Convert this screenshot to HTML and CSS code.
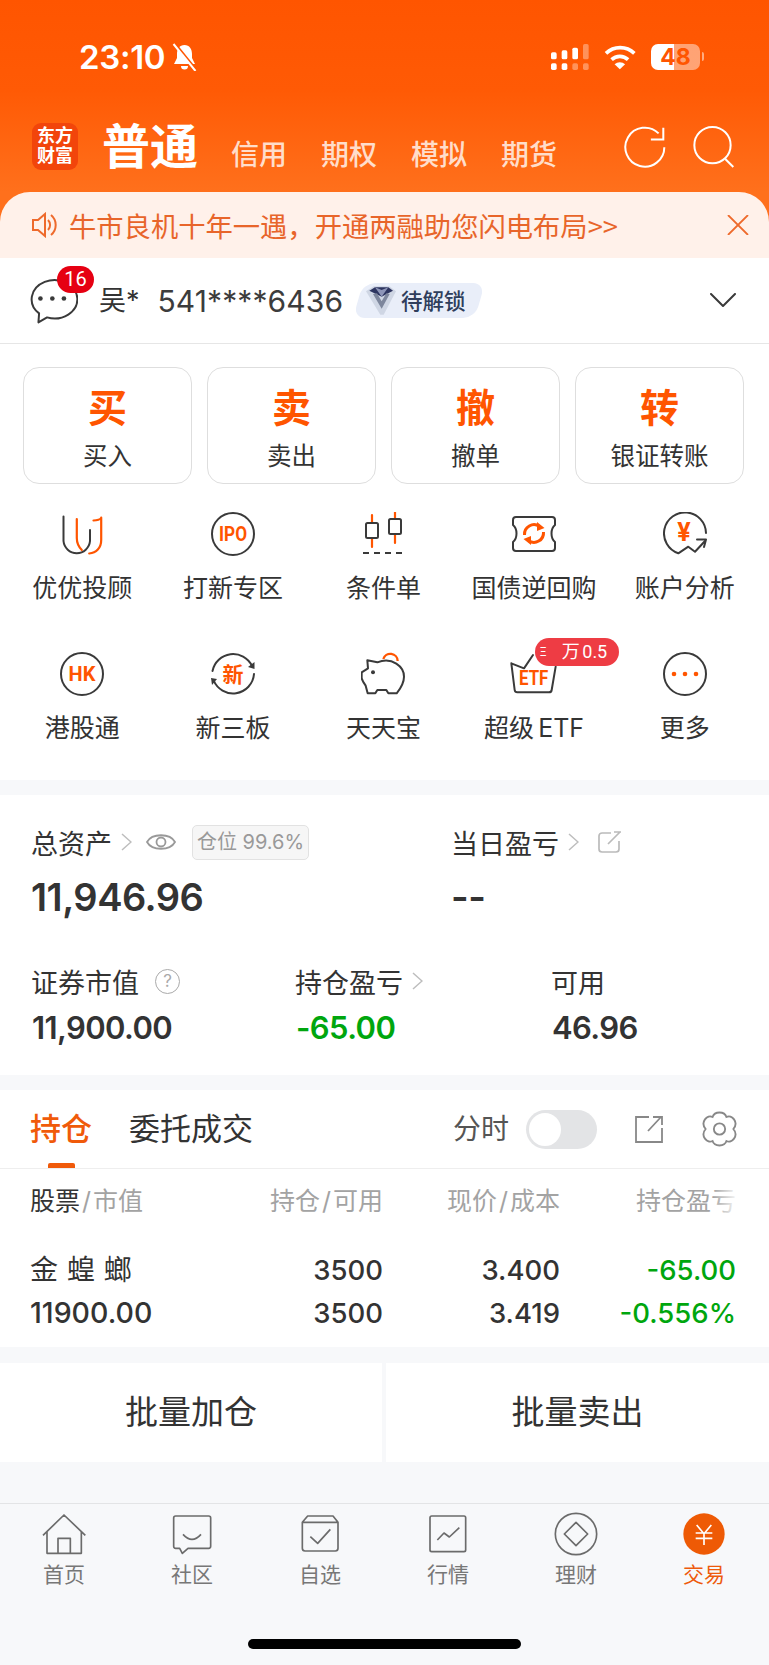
FILE: index.html
```html
<!DOCTYPE html>
<html lang="zh-CN">

<head>
    <meta charset="UTF-8">
    <meta name="viewport" content="width=device-width, initial-scale=1.0">
    <title>交易</title>
    <link rel="stylesheet" href="styles.css">
</head>

<body>

    <div class="top">
        <div class="status">
            <span class="time">23:10</span>
            <svg class="bell" viewBox="0 0 26 28">
                <path class="fill-white" d="M13 2C8 2 5.500 6 5.500 11V15L2.500 21H23.500L20.500 15V11C20.500 6 18 2 13 2Z"/>
                <path class="fill-white" d="M9.500 23h7a3.500 3.500 0 0 1-7 0Z"/>
                <path class="slash-back" d="M3 0L24 26"/>
                <path class="slash" d="M2 1L24 28"/>
            </svg>
            <svg class="signal" viewBox="33 27 114 78">
                <rect class="fill-white" x="33" y="52" width="17" height="21" rx="5"/>
                <rect class="fill-white" x="65" y="46" width="17" height="27" rx="5"/>
                <rect class="fill-white" x="97" y="38" width="17" height="35" rx="5"/>
                <rect class="fill-dim" x="129" y="27" width="17" height="46" rx="5"/>
                <rect class="fill-white" x="33" y="85" width="17" height="20" rx="5"/>
                <rect class="fill-white" x="65" y="85" width="17" height="20" rx="5"/>
                <rect class="fill-dim" x="97" y="85" width="17" height="20" rx="5"/>
                <rect class="fill-dim" x="129" y="85" width="17" height="20" rx="5"/>
            </svg>
            <svg class="wifi" viewBox="190 30 100 75">
                <path class="line-white-10" d="M196 55A62 62 0 0 1 282 55"/>
                <path class="line-white-10" d="M213 74A36 36 0 0 1 263 74"/>
                <path class="fill-white" d="M222 88L238 103L254 88A24 24 0 0 0 222 88Z"/>
            </svg>
            <div class="battery">48</div>
        </div>

        <div class="top-tabs">
            <div class="logo">东方<br>财富</div>
            <div class="tab-main">普通</div>
            <div class="tab-sub">信用</div>
            <div class="tab-sub">期权</div>
            <div class="tab-sub">模拟</div>
            <div class="tab-sub">期货</div>
            <svg class="top-icon top-icon-first" viewBox="255 275 125 125">
                <path class="line-white-6" d="M375 338A58 58 0 1 1 358 297"/>
                <path class="line-white-6" d="M335 315H372V280"/>
            </svg>
            <svg class="top-icon" viewBox="460 270 125 125">
                <circle class="line-white-6" cx="518" cy="327" r="54"/>
                <path class="line-white-6" d="M556 368L580 392"/>
            </svg>
        </div>

        <div class="notice">
            <svg class="speaker" viewBox="0 0 25 26">
                <path d="M1 8H6L13 2V24L6 18H1Z"/>
                <path d="M16 8a7 7 0 0 1 0 10"/>
                <path d="M19 3a13 13 0 0 1 0 20"/>
            </svg>
            <span class="notice-text">牛市良机十年一遇，开通两融助您闪电布局&gt;&gt;</span>
            <svg class="notice-close" viewBox="0 0 22 20">
                <path d="M1 0L21 20M21 0L1 20"/>
            </svg>
        </div>
    </div>

    <div class="account">
        <div class="chat">
            <svg class="chat-icon" viewBox="25 50 150 142">
                <path class="line-dark-6" d="M58 160A69 58 0 1 1 82 172L56 187Z"/>
                <circle class="fill-dark" cx="62" cy="115" r="7"/>
                <circle class="fill-dark" cx="98" cy="115" r="7"/>
                <circle class="fill-dark" cx="133" cy="115" r="7"/>
            </svg>
            <span class="chat-badge">16</span>
        </div>
        <span class="acc-name">吴*</span>
        <span class="acc-no">541****6436</span>
        <div class="level">
            <svg class="gem" viewBox="1035 85 90 85">
                <path class="gem-base" d="M1035 100L1058 85H1105L1125 100L1088 170H1078Z"/>
                <path class="gem-dark" d="M1045 98L1062 88H1102L1116 98L1082 116Z"/>
                <path class="gem-mid" d="M1056 108L1082 152L1106 108L1096 106L1082 130L1068 106Z"/>
                <path class="gem-light" d="M1062 88L1082 116L1102 88L1082 96Z"/>
            </svg>
            <span class="level-text">待解锁</span>
        </div>
        <svg class="acc-arrow" viewBox="0 0 26 15">
            <path class="line-dark-2" d="M1 1L13 13L25 1"/>
        </svg>
    </div>

    <div class="main-panel">
        <div class="trade-btns">
            <div class="trade-btn"><span class="trade-big">买</span><span class="trade-label">买入</span></div>
            <div class="trade-btn"><span class="trade-big">卖</span><span class="trade-label">卖出</span></div>
            <div class="trade-btn"><span class="trade-big">撤</span><span class="trade-label">撤单</span></div>
            <div class="trade-btn"><span class="trade-big">转</span><span class="trade-label">银证转账</span></div>
        </div>

        <div class="quick">
            <div class="quick-item">
                <svg class="quick-icon" viewBox="0 0 44 44">
                    <path class="line-dark-2" d="M3.500 4.500V29a13.300 13.300 0 0 0 26.500 0V18"/>
                    <path class="line-orange-2" d="M16.800 7V26c0 5 2 9 5 12"/>
                    <path class="line-orange-2" d="M33.500 8.500c3 0 7.500-1 7.700-3V28c0 8-5 13-12 13.500"/>
                </svg>
                <span class="quick-label">优优投顾</span>
            </div>
            <div class="quick-item">
                <svg class="quick-icon" viewBox="0 0 44 44">
                    <circle class="line-dark-2" cx="22" cy="22" r="21"/>
                    <text class="icon-text icon-text-20" x="22" y="29" textLength="28" lengthAdjust="spacingAndGlyphs">IPO</text>
                </svg>
                <span class="quick-label">打新专区</span>
            </div>
            <div class="quick-item">
                <svg class="quick-icon" viewBox="0 0 44 44">
                    <path class="line-orange-2" d="M11 3V35M34 0V31"/>
                    <rect class="line-dark-2 fill-bg" x="5" y="11" width="12" height="15" rx="1.500"/>
                    <rect class="line-dark-2 fill-bg" x="28" y="7" width="12" height="15" rx="1.500"/>
                    <path class="line-dark-2 dashed" d="M2 41H43"/>
                </svg>
                <span class="quick-label">条件单</span>
            </div>
            <div class="quick-item">
                <svg class="quick-icon" viewBox="0 0 44 44">
                    <path class="line-dark-2" d="M4 5H40a3 3 0 0 1 3 3v5c-2.500 2-3.500 5-3.500 8.500S40.500 28 43 30v6a3 3 0 0 1-3 3H4a3 3 0 0 1-3-3v-6c2.500-2 3.500-5 3.500-8.500S3.500 15 1 13V8a3 3 0 0 1 3-3Z"/>
                    <path class="line-orange-3" d="M12.500 23a9.500 9.500 0 0 1 15-8.500"/>
                    <path class="fill-orange" d="M25 10L32.500 16L25 19Z"/>
                    <path class="line-orange-3" d="M31.500 20a9.500 9.500 0 0 1-15 8.500"/>
                    <path class="fill-orange" d="M19 33L11.500 27L19 24Z"/>
                </svg>
                <span class="quick-label">国债逆回购</span>
            </div>
            <div class="quick-item">
                <svg class="quick-icon" viewBox="0 0 44 44">
                    <path class="line-dark-2" d="M43 21A21 21 0 1 0 15.300 41.300L25.300 34.700L32 39.700L42 29"/>
                    <path class="line-dark-2" d="M34 27.500H43L41 35"/>
                    <text class="icon-text icon-text-24" x="21" y="29">¥</text>
                </svg>
                <span class="quick-label">账户分析</span>
            </div>
            <div class="quick-item">
                <svg class="quick-icon" viewBox="0 0 44 44">
                    <circle class="line-dark-2" cx="22" cy="22" r="21"/>
                    <text class="icon-text icon-text-19" x="22" y="29">HK</text>
                </svg>
                <span class="quick-label">港股通</span>
            </div>
            <div class="quick-item">
                <svg class="quick-icon" viewBox="0 0 44 44">
                    <path class="line-dark-2" d="M1.500 19A21 21 0 0 1 41 14"/>
                    <path class="fill-dark" d="M37 15L43.500 17L43.500 10Z"/>
                    <path class="line-dark-2" d="M43 22A21 21 0 0 1 2.500 28"/>
                    <path class="fill-dark" d="M6 27L0 26L1 33Z"/>
                    <text class="icon-text icon-text-21" x="22" y="30">新</text>
                </svg>
                <span class="quick-label">新三板</span>
            </div>
            <div class="quick-item">
                <svg class="quick-icon" viewBox="936 51 132 132">
                    <path class="line-dark-6" d="M955 76L985 82C1030 65 1065 95 1065 125C1065 145 1055 160 1043 175H1018L1012 165H985L979 175H956L950 152C945 145 940 138 938 130V112L957 100Z"/>
                    <path class="line-orange-6" d="M1003 72a22 22 0 0 1 43 6"/>
                    <circle class="fill-dark" cx="972" cy="112" r="6"/>
                </svg>
                <span class="quick-label">天天宝</span>
            </div>
            <div class="quick-item">
                <svg class="quick-icon quick-icon-open" viewBox="39 51 132 132">
                    <path class="line-dark-6" d="M37 85L47 165Q48 172 55 172H150Q157 172 158 165L170 95M37 85L75 100L102 60"/>
                    <text class="icon-text icon-text-etf" x="104" y="150" textLength="88" lengthAdjust="spacingAndGlyphs">ETF</text>
                </svg>
                <span class="quick-label quick-label-etf">超级 ETF</span>
                <div class="etf-tag"><span class="etf-frag">Ξ</span><span class="etf-text">万 0.5</span></div>
            </div>
            <div class="quick-item">
                <svg class="quick-icon" viewBox="0 0 44 44">
                    <circle class="line-dark-2" cx="22" cy="22" r="21"/>
                    <circle class="fill-orange" cx="11" cy="22" r="2.300"/>
                    <circle class="fill-orange" cx="22" cy="22" r="2.300"/>
                    <circle class="fill-orange" cx="33" cy="22" r="2.300"/>
                </svg>
                <span class="quick-label">更多</span>
            </div>
        </div>
    </div>

    <div class="assets">
        <div class="assets-row">
            <div class="assets-col">
                <div class="assets-label">
                    <span>总资产</span>
                    <svg class="chev" viewBox="0 0 11 18"><path d="M1 1L10 9L1 17"/></svg>
                    <svg class="eye" viewBox="0 0 30 20">
                        <path d="M1 10C6 1 24 1 29 10C24 19 6 19 1 10Z"/>
                        <circle cx="15" cy="10" r="4.500"/>
                    </svg>
                    <span class="pos-tag">仓位 99.6%</span>
                </div>
                <div class="assets-total">11,946.96</div>
            </div>
            <div class="assets-col">
                <div class="assets-label">
                    <span>当日盈亏</span>
                    <svg class="chev" viewBox="0 0 11 18"><path d="M1 1L10 9L1 17"/></svg>
                    <svg class="ext-small" viewBox="0 0 24 22">
                        <path d="M13 2H4a3 3 0 0 0-3 3V18a3 3 0 0 0 3 3H18a3 3 0 0 0 3-3V10"/>
                        <path d="M10 13L22 1M16 1H23"/>
                    </svg>
                </div>
                <div class="assets-total">--</div>
            </div>
        </div>
        <div class="assets-sub">
            <div>
                <div class="sub-label">
                    <span>证券市值</span>
                    <span class="help">?</span>
                </div>
                <div class="sub-value">11,900.00</div>
            </div>
            <div>
                <div class="sub-label">
                    <span>持仓盈亏</span>
                    <svg class="chev" viewBox="0 0 11 18"><path d="M1 1L10 9L1 17"/></svg>
                </div>
                <div class="sub-value green">-65.00</div>
            </div>
            <div>
                <div class="sub-label"><span>可用</span></div>
                <div class="sub-value">46.96</div>
            </div>
        </div>
    </div>

    <div class="holdings">
        <div class="hold-tabs">
            <span class="hold-tab active">持仓</span>
            <span class="hold-tab">委托成交</span>
            <span class="fen">分时</span>
            <div class="toggle"><span class="knob"></span></div>
            <svg class="ext-big" viewBox="0 0 30 29">
                <path d="M15 2H2V27H28V13"/>
                <path d="M14 16L27 2M19 2H28V10"/>
            </svg>
            <svg class="gear" viewBox="0 0 36 35">
                <path d="M11.250 5.800C13 0 23 0 24.750 5.800C30 3 37 11 31.500 17.500C37 24 30 32 24.750 29.200C23 35 13 35 11.250 29.200C6 32 -1 24 4.500 17.500C-1 11 6 3 11.250 5.800Z"/>
                <circle cx="18" cy="17.500" r="5.500"/>
            </svg>
        </div>
        <div class="table-head">
            <div><span class="head-dark">股票</span><span class="sep">/</span>市值</div>
            <div class="cell-right">持仓<span class="sep">/</span>可用</div>
            <div class="cell-right">现价<span class="sep">/</span>成本</div>
            <div class="cell-right">持仓盈亏</div>
        </div>
        <div class="table-row">
            <div class="stock-name">金 蝗 螂</div>
            <div class="cell-right">3500</div>
            <div class="cell-right">3.400</div>
            <div class="cell-right green">-65.00</div>
            <div class="stock-value">11900.00</div>
            <div class="cell-right">3500</div>
            <div class="cell-right">3.419</div>
            <div class="cell-right green">-0.556%</div>
        </div>
    </div>

    <div class="batch">
        <div class="batch-btn">批量加仓</div>
        <div class="batch-btn">批量卖出</div>
    </div>

    <div class="nav">
        <div class="nav-items">
            <div class="nav-item">
                <svg class="nav-icon" viewBox="37 21 132 132">
                    <path d="M40 91L103 30L167 91M52 80V145H155V80M85 145V100H122V145"/>
                </svg>
                <span>首页</span>
            </div>
            <div class="nav-item">
                <svg class="nav-icon" viewBox="421 21 132 132">
                    <path d="M438 33H537Q543 33 543 39V124Q543 130 537 130H475L458 145L450 130H438Q432 130 432 124V39Q432 33 438 33Z"/>
                    <path d="M460 88Q487 118 514 88"/>
                </svg>
                <span>社区</span>
            </div>
            <div class="nav-item">
                <svg class="nav-icon" viewBox="803 21 132 132">
                    <path d="M832 33H908L923 52V130Q923 138 915 138H824Q816 138 816 130V52ZM816 52H923"/>
                    <path d="M840 95L862 115L900 73"/>
                </svg>
                <span>自选</span>
            </div>
            <div class="nav-item">
                <svg class="nav-icon" viewBox="18 21 132 132">
                    <rect x="30" y="33" width="107" height="107" rx="5"/>
                    <path d="M52 105L72 84L88 96L118 68"/>
                </svg>
                <span>行情</span>
            </div>
            <div class="nav-item">
                <svg class="nav-icon" viewBox="402 21 132 132">
                    <circle cx="468" cy="87" r="62"/>
                    <path d="M468 52L503 87L468 122L433 87Z"/>
                </svg>
                <span>理财</span>
            </div>
            <div class="nav-item nav-active">
                <svg class="nav-icon" viewBox="785 21 132 132">
                    <circle class="nav-disc" cx="851" cy="87" r="62"/>
                    <path class="nav-yen" d="M829 60L851 86L873 60M826 84H876M826 100H876M851 86V120"/>
                </svg>
                <span>交易</span>
            </div>
        </div>
        <div class="home-bar"></div>
    </div>

</body>

</html>
```

FILE: styles.css
```css
* {
    box-sizing: border-box;
}

body {
    margin: 0;
    width: 769px;
    height: 1665px;
    overflow: hidden;
    background-color: #f7f8fa;
    color: #333;
    font-family: Inter, "Noto Sans CJK SC", sans-serif;
}

svg {
    display: block;
    flex: none;
}

/* shared svg strokes */
.fill-white { fill: #fff; }
.fill-dim { fill: rgba(255, 255, 255, 0.35); }
.fill-dark { fill: #3a3a3a; }
.fill-orange { fill: #ff5500; }
.fill-bg { fill: #fff; }

.line-white-6,
.line-white-10,
.line-dark-2,
.line-dark-6,
.line-orange-2,
.line-orange-3,
.line-orange-6 {
    fill: none;
    stroke-linecap: round;
    stroke-linejoin: round;
}

.line-white-6 { stroke: #fff; stroke-width: 6; stroke-linecap: butt; stroke-linejoin: miter; }
.line-white-10 { stroke: #fff; stroke-width: 11; stroke-linecap: butt; }
.line-dark-2 { stroke: #3a3a3a; stroke-width: 2; }
.line-dark-6 { stroke: #3a3a3a; stroke-width: 6; }
.line-orange-2 { stroke: #ff5500; stroke-width: 2.200; }
.line-orange-3 { stroke: #ff5500; stroke-width: 3; stroke-linecap: butt; }
.line-orange-6 { stroke: #ff5500; stroke-width: 7; stroke-linecap: butt; }
.line-dark-2.fill-bg { fill: #fff; }
.dashed { stroke-dasharray: 6 5; stroke-linecap: butt; }

.icon-text {
    fill: #ff5500;
    font-family: Roboto, "Noto Sans CJK SC", sans-serif;
    font-weight: 700;
    text-anchor: middle;
}

.icon-text-19 { font-size: 20px; }
.icon-text-20 { font-size: 20px; }
.icon-text-21 { font-size: 21px; font-family: "Noto Sans CJK SC", sans-serif; }
.icon-text-24 { font-size: 25px; }
.icon-text-etf { font-size: 60px; }

/* header */
.top {
    height: 258px;
    padding-top: 43px;
    background: linear-gradient(#ff5500 0, #ff5a05 90px, #ff701c 192px);
    color: #fff;
}

.status {
    display: flex;
    align-items: center;
    height: 28px;
    padding: 0 69px 0 79px;
}

.time {
    font-size: 33px;
    font-weight: 600;
    letter-spacing: -0.3px;
    line-height: 28px;
}

.bell {
    width: 27px;
    height: 28px;
    margin-left: 6px;
}

.slash {
    stroke: #fff;
    stroke-width: 2;
}

.slash-back {
    stroke: #ff5500;
    stroke-width: 2.500;
}

.signal {
    width: 38px;
    height: 26px;
    margin-left: auto;
}

.wifi {
    width: 33px;
    height: 25px;
    margin-left: 15px;
}

.battery {
    position: relative;
    width: 49px;
    height: 26px;
    margin-left: 14px;
    border-radius: 7px;
    background: linear-gradient(90deg, #fff 47%, rgba(255, 255, 255, 0.45) 47%);
    color: #ff5500;
    font-size: 23px;
    font-weight: 700;
    line-height: 26px;
    text-align: center;
}

.battery::after {
    content: "";
    position: absolute;
    right: -4px;
    top: 8px;
    width: 2px;
    height: 9px;
    border-radius: 0 2px 2px 0;
    background: rgba(255, 255, 255, 0.5);
}

.top-tabs {
    display: flex;
    align-items: flex-end;
    height: 47px;
    margin-top: 52px;
    padding: 0 34px 0 32px;
}

.logo {
    width: 46px;
    height: 47px;
    padding-top: 3px;
    border-radius: 9px;
    background-color: #f2450b;
    font-size: 18px;
    font-weight: 700;
    line-height: 20px;
    text-align: center;
}

.tab-main {
    margin: 0 33px 0 24px;
    font-size: 48px;
    font-weight: 700;
    line-height: 47px;
}

.tab-sub {
    width: 56px;
    margin-right: 34px;
    color: rgba(255, 255, 255, 0.78);
    font-size: 28px;
    font-weight: 500;
    line-height: 30px;
}

.top-icon {
    width: 42px;
    height: 42px;
    margin-bottom: 2px;
}

.top-icon-first {
    margin-left: auto;
    margin-right: 27px;
}

.notice {
    display: flex;
    align-items: center;
    height: 66px;
    margin-top: 22px;
    padding: 0 20px 0 32px;
    border-radius: 30px 30px 0 0;
    background-color: #fff1ea;
    color: #e8652a;
}

.speaker {
    width: 25px;
    height: 26px;
    fill: none;
    stroke: #ee6a2c;
    stroke-width: 2;
}

.notice-text {
    margin-left: 12px;
    font-size: 27.300px;
    line-height: 36px;
    font-family: "Noto Sans CJK SC", sans-serif;
}

.notice-close {
    width: 22px;
    height: 20px;
    margin-left: auto;
    fill: none;
    stroke: #ee6a2c;
    stroke-width: 1.800;
}

/* account line */
.account {
    display: flex;
    align-items: center;
    height: 86px;
    padding: 0 33px 0 28px;
    border-bottom: 1px solid #e6e6e6;
    background-color: #fff;
}

.chat {
    position: relative;
    width: 50px;
    height: 47px;
}

.chat-icon {
    width: 50px;
    height: 47px;
}

.chat-badge {
    position: absolute;
    left: 29px;
    top: -11px;
    width: 37px;
    height: 27px;
    border-radius: 14px;
    background-color: #e60012;
    color: #fff;
    font-family: Roboto, sans-serif;
    font-size: 20px;
    line-height: 27px;
    text-align: center;
}

.acc-name {
    margin-left: 21px;
    font-size: 27px;
    line-height: 36px;
}

.acc-no {
    margin-left: 18px;
    color: #3c3c3c;
    font-size: 30px;
    letter-spacing: 0.1px;
    line-height: 36px;
}

.level {
    position: relative;
    display: flex;
    align-items: center;
    width: 122px;
    height: 35px;
    margin-left: 15px;
    padding-left: 8px;
}

.level::before {
    content: "";
    position: absolute;
    inset: 0;
    border-radius: 12px;
    background-color: #e9eef9;
    transform: skewX(-16deg);
}

.gem {
    position: relative;
    width: 30px;
    height: 29px;
}

.level-text {
    position: relative;
    margin-left: 5px;
    color: #2f3e5c;
    font-size: 21.500px;
    font-weight: 500;
    line-height: 30px;
}

.gem-base { fill: #cfd6e4; }
.gem-dark { fill: #2d3560; }
.gem-mid { fill: #7d869c; }
.gem-light { fill: #8d95b8; }

.acc-arrow {
    width: 26px;
    height: 15px;
    margin-left: auto;
}

/* trade buttons and quick entries */
.main-panel {
    height: 436px;
    padding-top: 23px;
    background-color: #fff;
}

.trade-btns {
    display: grid;
    grid-template-columns: repeat(4, 169px);
    gap: 15px;
    padding: 0 23px;
}

.trade-btn {
    display: flex;
    flex-direction: column;
    align-items: center;
    height: 117px;
    padding-top: 20px;
    border: 1.500px solid #dedede;
    border-radius: 16px;
}

.trade-big {
    color: #ff5500;
    font-size: 39px;
    font-weight: 700;
    line-height: 40px;
}

.trade-label {
    margin-top: 15px;
    font-size: 24.500px;
    line-height: 26px;
}

.quick {
    display: grid;
    grid-template-columns: repeat(5, 1fr);
    grid-template-rows: 140px auto;
    margin-top: 28px;
    padding: 0 9px 0 7px;
}

.quick-item {
    position: relative;
    display: flex;
    flex-direction: column;
    align-items: center;
}

.quick-icon {
    width: 44px;
    height: 44px;
}

.quick-icon-open {
    overflow: visible;
}

.quick-label {
    margin-top: 18px;
    font-size: 25px;
    line-height: 28px;
    white-space: nowrap;
}

.quick-label-etf {
    word-spacing: -3px;
}

.etf-tag {
    position: absolute;
    left: 76px;
    top: -14px;
    display: flex;
    align-items: center;
    width: 84px;
    height: 28px;
    padding-left: 5px;
    border-radius: 14px;
    background-color: #ee3c44;
    color: #fff;
    font-family: Roboto, "Noto Sans CJK SC", sans-serif;
    line-height: 28px;
}

.etf-frag {
    width: 8px;
    margin-right: 14px;
    font-size: 12px;
}

.etf-text {
    font-size: 18px;
    white-space: nowrap;
    word-spacing: -2px;
}

/* assets */
.assets {
    height: 280px;
    margin-top: 15px;
    padding: 28px 0 0 31px;
    background-color: #fff;
}

.assets-row {
    display: grid;
    grid-template-columns: 420px 1fr;
}

.assets-label {
    display: flex;
    align-items: center;
    height: 38px;
    font-size: 27px;
}

.chev {
    width: 11px;
    height: 18px;
    margin-left: 9px;
    fill: none;
    stroke: #bdbdbd;
    stroke-width: 1.500;
}

.eye {
    width: 30px;
    height: 20px;
    margin-left: 14px;
    fill: none;
    stroke: #999;
    stroke-width: 1.800;
}

.pos-tag {
    width: 117px;
    height: 35px;
    margin-left: 16px;
    border: 1px solid #e2e2e2;
    border-radius: 5px;
    background-color: #f6f6f6;
    color: #999;
    font-size: 20px;
    line-height: 33px;
    text-align: center;
    white-space: nowrap;
}

.ext-small {
    width: 24px;
    height: 22px;
    margin-left: 19px;
    fill: none;
    stroke: #bbb;
    stroke-width: 1.700;
}

.assets-total {
    height: 44px;
    margin-top: 14px;
    font-size: 38px;
    font-weight: 600;
    letter-spacing: -0.5px;
    line-height: 44px;
}

.assets-sub {
    display: grid;
    grid-template-columns: 264px 256px 1fr;
    margin-top: 47px;
}

.sub-label {
    display: flex;
    align-items: center;
    height: 30px;
    font-size: 27px;
}

.help {
    width: 25px;
    height: 25px;
    margin-left: 16px;
    border: 1.500px solid #aaa;
    border-radius: 50%;
    color: #aaa;
    font-size: 17px;
    line-height: 22px;
    text-align: center;
}

.sub-value {
    margin-top: 14px;
    padding-left: 1px;
    font-size: 31px;
    font-weight: 600;
    letter-spacing: -0.6px;
    line-height: 36px;
}

.green {
    color: #00a60e;
}

/* holdings */
.holdings {
    height: 257px;
    margin-top: 15px;
    background-color: #fff;
}

.hold-tabs {
    position: relative;
    display: flex;
    align-items: center;
    height: 79px;
    padding: 0 31px 0 30px;
    border-bottom: 1px solid #eee;
}

.hold-tab {
    margin-right: 37px;
    font-size: 31px;
    line-height: 40px;
}

.hold-tab.active {
    color: #f05a0a;
    font-weight: 500;
}

.hold-tab.active::after {
    content: "";
    position: absolute;
    left: 48px;
    bottom: 0;
    width: 27px;
    height: 5px;
    border-radius: 2px 2px 0 0;
    background-color: #f05a0a;
}

.fen {
    margin-left: auto;
    color: #555;
    font-size: 28px;
    line-height: 36px;
}

.toggle {
    width: 71px;
    height: 39px;
    margin-left: 17px;
    padding: 3px;
    border-radius: 20px;
    background-color: #e3e4e6;
}

.knob {
    display: block;
    width: 32px;
    height: 33px;
    border-radius: 50%;
    background-color: #fff;
}

.ext-big {
    width: 30px;
    height: 29px;
    margin-left: 37px;
    fill: none;
    stroke: #888;
    stroke-width: 1.800;
}

.gear {
    width: 37px;
    height: 36px;
    margin-left: 37px;
    fill: none;
    stroke: #888;
    stroke-width: 1.800;
}

.table-head,
.table-row {
    display: grid;
    grid-template-columns: 180px 173px 177px 176px;
    padding: 0 33px 0 30px;
}

.table-head {
    position: relative;
    margin-top: 20px;
    color: #a3a3a3;
    font-size: 25px;
    line-height: 24px;
    white-space: nowrap;
}

.table-head::after {
    content: "";
    position: absolute;
    right: 30px;
    top: 0;
    width: 26px;
    height: 24px;
    background: linear-gradient(90deg, rgba(255, 255, 255, 0), #fff);
}

.head-dark {
    color: #333;
}

.sep {
    margin: 0 2px;
}

.cell-right {
    text-align: right;
}

.table-row {
    margin-top: 36px;
    font-size: 27.500px;
    font-weight: 500;
    line-height: 42.500px;
}

.stock-name {
    font-size: 28px;
    font-weight: 400;
    letter-spacing: 1px;
    word-spacing: -1px;
}

.stock-value {
    font-size: 28.500px;
}

/* batch buttons */
.batch {
    display: grid;
    grid-template-columns: 382px 383px;
    gap: 4px;
    margin-top: 16px;
}

.batch-btn {
    height: 99px;
    background-color: #fff;
    font-size: 33px;
    line-height: 99px;
    text-align: center;
}

/* bottom nav */
.nav {
    margin-top: 41px;
    padding-top: 8px;
    border-top: 1.500px solid #e3e4e6;
}

.nav-items {
    display: grid;
    grid-template-columns: repeat(6, 128px);
}

.nav-item {
    display: flex;
    flex-direction: column;
    align-items: center;
    color: #777;
    font-size: 21px;
    line-height: 24px;
}

.nav-icon {
    width: 44px;
    height: 44px;
    margin-bottom: 7px;
    fill: none;
    stroke: #6b6b6b;
    stroke-width: 5;
    stroke-linejoin: round;
}

.nav-active {
    color: #ee5a0c;
}

.nav-disc {
    fill: #ee5a05;
    stroke: none;
}

.nav-yen {
    stroke: #fff;
}

.home-bar {
    width: 273px;
    height: 10px;
    margin: 52px auto 0;
    border-radius: 5px;
    background-color: #000;
}
```
